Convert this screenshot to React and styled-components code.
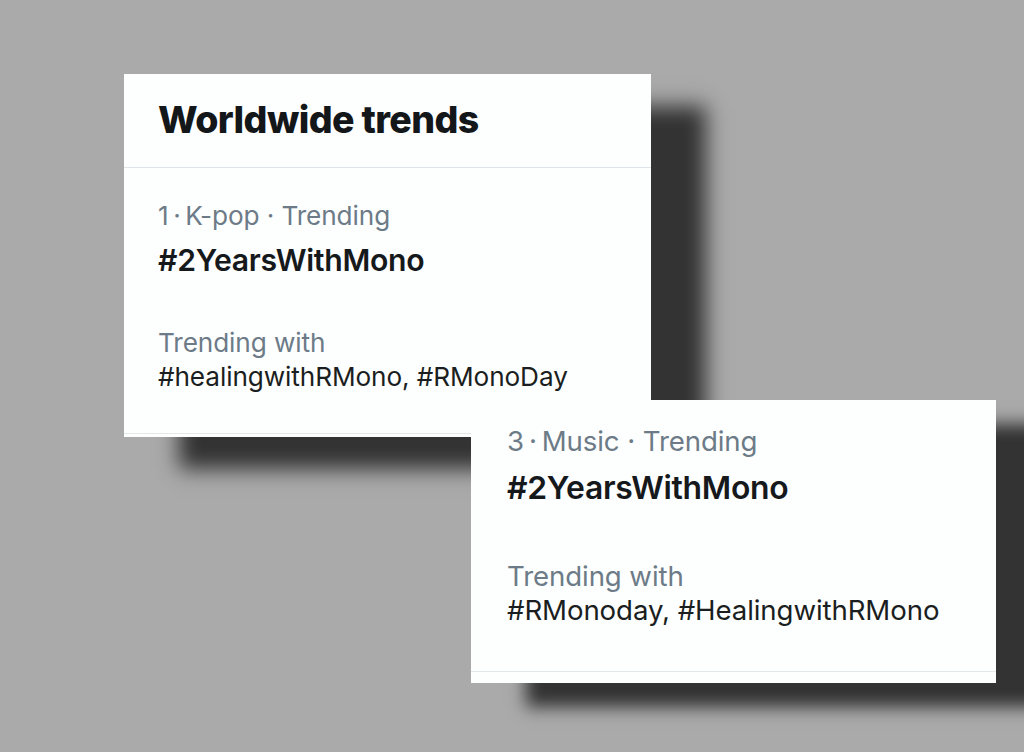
import React from 'react';
import styled, {createGlobalStyle} from 'styled-components';

const GlobalStyle = createGlobalStyle`
  html, body {
    margin: 0;
    padding: 0;
    background: #aaaaaa;
  }
  body {
    font-family: Inter, "Open Sans", Roboto, sans-serif;
    -webkit-font-smoothing: antialiased;
  }
`;

const Canvas = styled.div`
  position: relative;
  width: 1024px;
  height: 752px;
  overflow: hidden;
  background: #aaaaaa;
`;

// the two cards are pasted on top of each other like a collage
const Card = styled.section`
  position: absolute;
  left: ${p => p.x}px;
  top: ${p => p.y}px;
  width: ${p => p.w}px;
  height: ${p => p.h}px;
  display: flex;
  flex-direction: column;
  background: #fdfefe;
  box-shadow: ${p => p.shadow};
  color: #15191d;
`;

const Header = styled.header`
  padding: 24px 34px 25px;
  border-bottom: 1px solid #dfe5e8;
`;

const Title = styled.h2`
  margin: 0;
  font-size: 37.5px;
  line-height: 44px;
  font-weight: 800;
  letter-spacing: -0.6px;
  color: #14171a;
`;

const Trend = styled.div`
  flex: 1;
  display: flex;
  flex-direction: column;
  padding: ${p => p.pad};
  border-bottom: 1px solid #e3e8eb;
`;

const Meta = styled.div`
  font-size: ${p => 26.2 * p.scale}px;
  line-height: ${p => Math.round(30 * p.scale)}px;
  color: #6c7b87;
  letter-spacing: -0.1px;
  margin-top: ${p => p.gap || 0}px;
  white-space: nowrap;
`;

const Tag = styled.div`
  font-size: ${p => 30.2 * p.scale}px;
  line-height: ${p => Math.round(34 * p.scale)}px;
  font-weight: 600;
  letter-spacing: -0.3px;
  color: #16191c;
  margin-top: ${p => p.gap}px;
  white-space: nowrap;
`;

const Related = styled.div`
  font-size: ${p => 26.2 * p.scale}px;
  line-height: ${p => Math.round(30 * p.scale)}px;
  color: #1b1e21;
  letter-spacing: -0.1px;
  margin-top: ${p => p.gap}px;
  white-space: nowrap;
`;

const Strip = styled.div`
  height: ${p => p.h}px;
`;

function TrendItem({trend, scale, pad, gaps}) {
    return (
        <Trend pad={pad}>
            <Meta scale={scale}>{trend.rank}{'\u2009·\u2009'}{trend.category} · Trending</Meta>
            <Tag scale={scale} gap={gaps[0]}>{trend.tag}</Tag>
            <Meta scale={scale} gap={gaps[1]}>Trending with</Meta>
            <Related scale={scale} gap={gaps[2]}>{trend.related}</Related>
        </Trend>
    );
}

const trends = [
    {rank: 1, category: 'K-pop', tag: '#2YearsWithMono', related: '#healingwithRMono, #RMonoDay'},
    {rank: 3, category: 'Music', tag: '#2YearsWithMono', related: '#RMonoday, #HealingwithRMono'},
];

export default function App() {
    return (
        <>
            <GlobalStyle/>
            <Canvas>
                <Card x={124} y={74} w={527} h={363} shadow="55px 32px 20px #333333">
                    <Header>
                        <Title>Worldwide trends</Title>
                    </Header>
                    <TrendItem trend={trends[0]} scale={1} pad="33px 34px 0" gaps={[12, 51, 4]}/>
                    <Strip h={3}/>
                </Card>
                <Card x={471} y={400} w={525} h={283} shadow="55px 24px 16px #333333">
                    <TrendItem trend={trends[1]} scale={1.055} pad="25px 36px 0" gaps={[13, 54, 2]}/>
                    <Strip h={11}/>
                </Card>
            </Canvas>
        </>
    );
}
